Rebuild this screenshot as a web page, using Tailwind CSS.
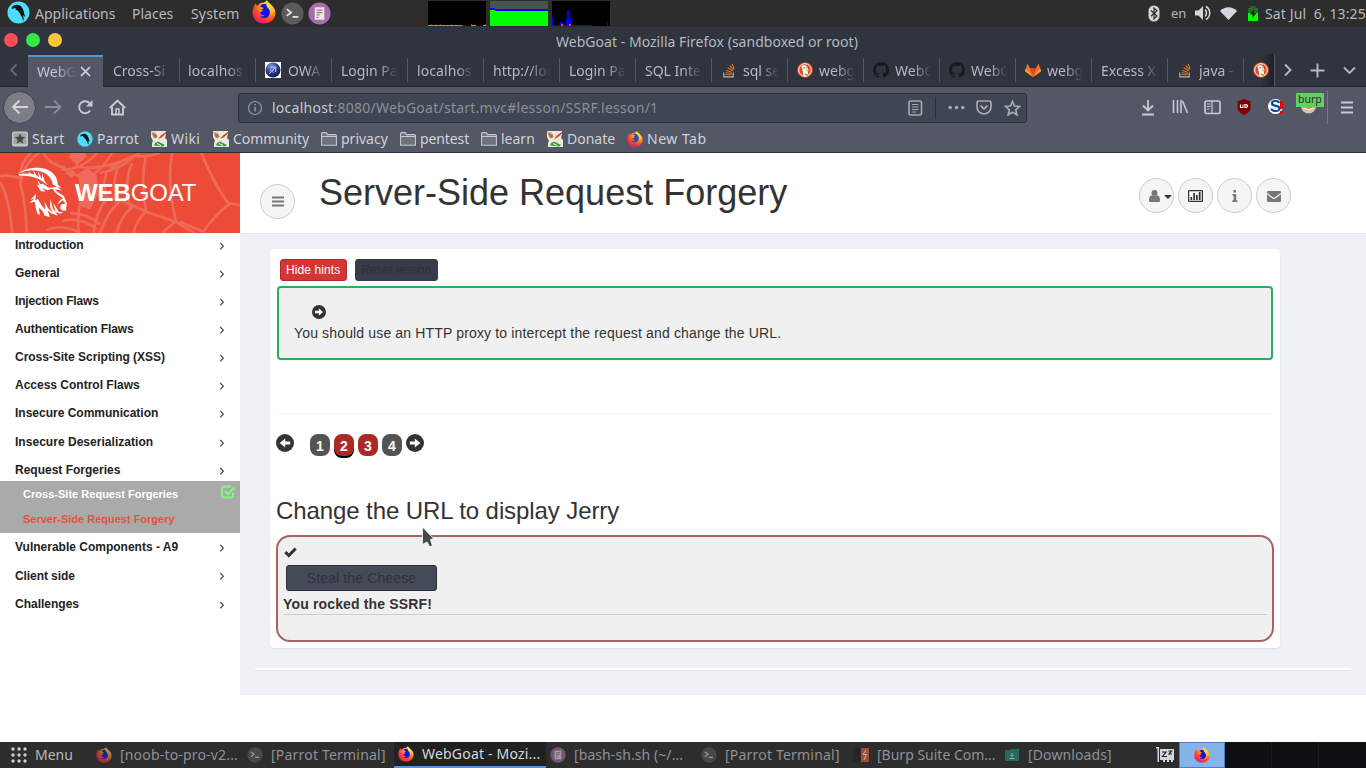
<!DOCTYPE html>
<html lang="en">
<head>
<meta charset="utf-8">
<title>WebGoat</title>
<script src="https://cdn.jsdelivr.net/npm/@tailwindcss/browser@4"></script>
</head>
<body class="w-[1366px] h-[768px] overflow-hidden bg-white flex flex-col relative font-['Noto_Sans',sans-serif] text-[14px] text-[#b4b9c2]">
<svg width="0" height="0" class="absolute">
  <defs>
    <radialGradient id="fxg" cx=".75" cy=".15" r="1"><stop offset="0" stop-color="#fff14a"/><stop offset=".35" stop-color="#ffb52a"/><stop offset=".65" stop-color="#ff4e2a"/><stop offset="1" stop-color="#e3106a"/></radialGradient>
    <radialGradient id="owg" cx=".4" cy=".3" r=".8"><stop offset="0" stop-color="#8fa4e0"/><stop offset=".5" stop-color="#2b3f93"/><stop offset="1" stop-color="#060a33"/></radialGradient>
    <symbol id="fx" viewBox="0 0 24 24"><path d="M12 2.500C13.500 2 14 1 14.800 0c1 2.500 3.200 3.200 5 5.500C22 7 23.500 10 23.500 13c0 6-5 10.500-11.500 10.500S.5 19 .5 12.500C.5 9 2 6 3.500 3.500L5 6c2-2.500 4.500-3.500 7-3.500z" fill="url(#fxg)"/><path d="M8 6c2-2 5-2.500 6.500-1.500C14 6 15 7 16.500 8.500c2 2.500 1.800 6-.2 8-2.300 2.200-6.300 2-8.500 0 2 .5 4-.3 5-1.500-2.800.8-4.300-.8-4.800-2.500L11 11 9.500 9.500 12 8c-1.500-.2-2.800-1-4-2z" fill="#1010f0"/></symbol>
    <symbol id="fxn" viewBox="0 0 24 24"><path d="M12 2.500C13.500 2 14 1 14.800 0c1 2.500 3.200 3.200 5 5.500C22 7 23.500 10 23.500 13c0 6-5 10.500-11.500 10.500S.5 19 .5 12.500C.5 9 2 6 3.500 3.500L5 6c2-2.500 4.500-3.500 7-3.500z" fill="url(#fxg)"/><path d="M9 5c3-1.500 6-.5 7.500 2 2.500 3.500 1 8-2 9.500-3 1.300-6 0-7-2 2 .6 3.500.2 4.500-1-2.500.3-3.500-1-4-2.500L11 10 10 8.500 12 7c-1.200-.5-2-1-3-2z" fill="#2b4ea8"/></symbol>
    <symbol id="parrot" viewBox="0 0 24 24"><circle cx="12" cy="12" r="11.500" fill="#4cdcfc"/><path d="M5 7C7 3.500 12 3 15 6c2.500 2.500 2.800 6.500 4 11l-2-2.500.5 7-2.500-5.500c-1-2-2.500-4.500-4.500-6.500L9 9.500 9.500 8C8 7 6.500 7.500 5 8.500z" fill="#111"/></symbol>
    <symbol id="term" viewBox="0 0 24 24"><circle cx="12" cy="12" r="11.500" fill="#5b5b5b"/><path d="M6 7.500l4.500 3.500L6 14.500M12 15.500h6" fill="none" stroke="#e6e6e6" stroke-width="1.800"/></symbol>
    <symbol id="pluma" viewBox="0 0 24 24"><circle cx="12" cy="12" r="11.500" fill="#a86bb0"/><path d="M7 5.500H17V18.500H7z" fill="#f0e9dd"/><path d="M9 8.500H15M9 11H15M9 13.500H12M9 16h2" stroke="#8d7b84" stroke-width="1.300"/></symbol>
    <symbol id="ddg" viewBox="0 0 16 16"><circle cx="8" cy="8" r="7.800" fill="#de4b22"/><circle cx="8" cy="8" r="6.300" fill="none" stroke="#fff" stroke-width="1"/><path d="M4.500 4.500C6 2.800 9 3 10.300 5c.6 1.200.8 3 .6 4.500l.4 4.300C9.500 14.500 8 14.400 6.500 14L5.300 7.500z" fill="#fff"/><path d="M8.500 7.500c2-.3 3.500 0 4.500.3-.5 1-2.500 1.600-4.500 1.400z" fill="#fbbf1c"/><circle cx="7" cy="6" r=".8" fill="#2d4f8e"/><circle cx="9.300" cy="5.800" r=".6" fill="#2d4f8e"/><path d="M7.500 11.500l3.500 1v1.300l-3-.5z" fill="#3aa935"/></symbol>
    <symbol id="gh" viewBox="0 0 16 16"><path fill="#17191d" d="M8 0C3.580 0 0 3.580 0 8c0 3.540 2.290 6.530 5.470 7.590.4.070.55-.17.55-.38v-1.490c-2.010.37-2.530-.49-2.690-.94-.09-.23-.48-.94-.82-1.130-.28-.15-.68-.52-.01-.53.63-.01 1.080.58 1.230.82.720 1.210 1.870.87 2.330.66.070-.52.280-.87.510-1.070-1.780-.2-3.640-.89-3.640-3.950 0-.87.310-1.590.82-2.150-.08-.2-.36-1.020.08-2.120 0 0 .67-.21 2.200.82a7.500 7.500 0 014 0c1.530-1.040 2.200-.82 2.200-.82.44 1.100.16 1.920.08 2.120.51.56.82 1.270.82 2.150 0 3.070-1.870 3.750-3.650 3.950.29.25.54.730.54 1.480v2.200c0 .21.15.46.55.38A8 8 0 0016 8c0-4.420-3.580-8-8-8z"/></symbol>
    <symbol id="so" viewBox="0 0 16 16"><path d="M2.800 10.500v4.300h9.400v-4.300" fill="none" stroke="#b0b4b9" stroke-width="1.200"/><path d="M4.500 12.800h6M4.700 10.800l5.900.7M5.300 8.400l5.600 1.800M6.700 5.700l5 3.100M8.800 3.400l3.700 4.500M11.200 2l2 5" stroke="#d9731f" stroke-width="1.100"/></symbol>
    <symbol id="gl" viewBox="0 0 16 16"><path d="M8 15L0 9.200 2.500 1.500 5 6.500h6l2.500-5L16 9.200z" fill="#fc6d26"/><path d="M8 15L5 6.500h6z" fill="#e24329"/><path d="M8 15L0 9.200l.8-2.700z M8 15l8-5.800-.8-2.700z" fill="#fca326"/></symbol>
    <symbol id="wiki" viewBox="0 0 16 16"><path d="M0 0h15v3l-1 4 2 2v7H1v-4l1-2-2-4z" fill="#e9e9df"/><path d="M0 .5l4 .5 2 3-1 4-3-2z" fill="#d9b28d"/><path d="M15.500.5L10 4.500 7 8l3.500-1.500 5-4.500z" fill="#d03a22"/><path d="M1 2l4.500 1.500L6.500 6 3 7z" fill="#b9683b"/><path d="M3 14.500L4 12l3-1.500 7 3.500-2 1.500z" fill="#3c9b3a"/><path d="M6 12.500l4 2" stroke="#fff" stroke-width="1"/></symbol>
    <symbol id="folder" viewBox="0 0 16 16"><path d="M.6 14.200V2.400l.8-.8h4l1 2h8.200l.8.8v9.800z" fill="#6d717d" stroke="#c6c9d0" stroke-width="1.100"/><path d="M1 5.500h14" stroke="#c6c9d0"/></symbol>
    <symbol id="chev" viewBox="0 0 8 10"><path d="M2.300 2L5.300 5.200 2.300 8.400" fill="none" stroke="#444" stroke-width="1.200"/></symbol>
    <symbol id="arr" viewBox="0 0 18 18"><circle cx="9" cy="9" r="9" fill="#333"/><path d="M3.800 7.400h5V4.500L14.300 9l-5.500 4.500v-2.900h-5z" fill="#fff"/></symbol>
  </defs>
</svg>

<!-- desktop panel -->
<div class="h-[27px] shrink-0 bg-[#2d2d2d] flex items-center text-[#b6b9bd] leading-[27px]">
  <svg class="w-[23px] h-[23px] ml-[7px] mb-[2px]"><use href="#parrot"/></svg>
  <span class="ml-[5px] w-[97px]">Applications</span><span class="w-[59px]">Places</span><span class="w-[61px] tracking-[0.150px]">System</span>
  <svg class="w-6 h-6 mb-[3px]"><use href="#fx"/></svg>
  <svg class="w-[23px] h-[23px] ml-[5px] mb-px"><use href="#term"/></svg>
  <svg class="w-[23px] h-[23px] ml-[4px] mb-px"><use href="#pluma"/></svg>
  <svg class="ml-[97px] -mt-px" width="182" height="25" shape-rendering="crispEdges">
    <rect width="58" height="25" fill="#000"/><path d="M0 24.500h34M43 24.500h5M55 24.500h3" stroke="#0f0"/><path d="M3 23.500h1M7 23.500h1M12 23.500h1M23 23.500h1M43 23.500h1M57 23.500h1" stroke="#f00"/>
    <rect x="62" width="58" height="25" fill="#46544b"/><path d="M62 7h5v1h53v17H62z" fill="#00f"/><path d="M62 9h5v1h53v15H62z" fill="#0f0"/>
    <rect x="124" width="58" height="25" fill="#000"/><path d="M124 16h1v8h7v-3h3v3h3v-6h1V9h2v10h1v-3h1v8h21v1h-40zM179 21h1v4h-1z" fill="#00f"/><path d="M133 24h2M141 24h2" stroke="#f33" stroke-width="2"/>
  </svg>
  <div class="ml-auto flex items-center h-full">
    <svg class="mb-px" width="12" height="17" viewBox="0 0 12 17"><rect x=".5" y=".5" width="11" height="16" rx="5.500" fill="#d3d8e0"/><path d="M3 5.500l6 5.500-3 2.800V3l3 2.700-6 5.500" fill="none" stroke="#2d2d2d" stroke-width="1.200"/></svg>
    <span class="ml-[11px] w-[24px] text-[13px] -mt-px">en</span>
    <svg class="mb-px" width="16" height="16" viewBox="0 0 16 16"><path d="M0 5.500h3.500L8 1v14l-4.500-4.500H0z" fill="#d3d8e0"/><path d="M10 4.500c2 2 2 5 0 7M11 1.500c5 3 5 10 0 13" fill="none" stroke="#d3d8e0" stroke-width="1.500"/></svg>
    <svg class="ml-[9px] mb-px" width="17" height="13" viewBox="0 0 17 13"><path d="M0 4C5-1 12-1 17 4l-8.500 9z" fill="#d3d8e0"/></svg>
    <svg class="ml-[10px] mb-px" width="12" height="15" viewBox="0 0 12 15"><path d="M1 2h2.500V0h5v2H11v13H1z" fill="#256b2a"/><path d="M1 7h10v8H1z" fill="#0f0"/><path d="M7 3L3 8.500h2.500V12L9.500 7H7z" fill="#222"/></svg>
    <span class="ml-[6px] whitespace-pre w-[101px] tracking-[0.120px]">Sat Jul  6, 13:25</span>
  </div>
</div>

<!-- window title -->
<div class="h-[27px] shrink-0 bg-[#2f343f] flex items-center relative">
  <div class="flex gap-2 ml-[4px] mb-[1px]"><i class="size-[14px] rounded-full bg-[#f84e56]"></i><i class="size-[14px] rounded-full bg-[#38e647]"></i><i class="size-[14px] rounded-full bg-[#fdc43a]"></i></div>
  <span class="ml-[494px] leading-[27px] mt-[2px] whitespace-nowrap tracking-[0.030px]">WebGoat - Mozilla Firefox (sandboxed or root)</span>
</div>

<!-- tabs -->
<div class="h-[33px] shrink-0 bg-[#2f343f] border-b border-[#22252d] flex items-stretch leading-[33px] whitespace-nowrap">
  <div class="w-[28px] flex items-center justify-center"><svg width="10" height="14" viewBox="0 0 10 14"><path d="M7.500 1.500L2 7l5.500 5.500" fill="none" stroke="#646973" stroke-width="1.800"/></svg></div>
  <div class="w-[75px] bg-[#545866] -mb-px border-t-2 border-[#5294e2] flex items-center pl-[9px] text-[#c3c7ce] mt-[1px]">
    <span class="w-[39px] mask-r-from-50% mask-r-to-100% -mt-[2px]">WebG</span>
    <svg class="ml-[4px] mb-px" width="11" height="11" viewBox="0 0 11 11"><path d="M1 1l9 9M10 1l-9 9" stroke="#d3d7dd" stroke-width="1.700"/></svg>
  </div>
  <div class="w-[76px] pl-[10px] flex items-center"><span class="w-[57px] mask-r-from-70% mask-r-to-100%">Cross-Si</span></div>
  <div class="w-[76px] pl-[9px] flex items-center relative"><i class="w-px h-6 bg-[#555a65] absolute left-0"></i><span class="w-[57px] mask-r-from-70% mask-r-to-100% tracking-[0.100px]">localhos</span></div>
  <div class="w-[76px] pl-[10px] flex items-center relative"><i class="w-px h-6 bg-[#555a65] absolute left-0"></i><svg width="16" height="16" viewBox="0 0 16 16"><path d="M0 0h16v16H0z" fill="#fff"/><circle cx="8" cy="8" r="7.500" fill="url(#owg)"/><path d="M4 12l7-7M6 5.500l5-.5-.5 5M5.500 8l2.500 2.500" stroke="#aebcf0" fill="none"/></svg><span class="ml-[7px] w-[36px] mask-r-from-50% mask-r-to-100%">OWA</span></div>
  <div class="w-[76px] pl-[10px] flex items-center relative"><i class="w-px h-6 bg-[#555a65] absolute left-0"></i><span class="w-[57px] mask-r-from-65% mask-r-to-100%">Login Pa</span></div>
  <div class="w-[76px] pl-[10px] flex items-center relative"><i class="w-px h-6 bg-[#555a65] absolute left-0"></i><span class="w-[57px] mask-r-from-70% mask-r-to-100% tracking-[0.100px]">localhos</span></div>
  <div class="w-[76px] pl-[10px] flex items-center relative"><i class="w-px h-6 bg-[#555a65] absolute left-0"></i><span class="w-[60px] mask-r-from-60% mask-r-to-95%">http://loc</span></div>
  <div class="w-[76px] pl-[10px] flex items-center relative"><i class="w-px h-6 bg-[#555a65] absolute left-0"></i><span class="w-[57px] mask-r-from-65% mask-r-to-100%">Login Pa</span></div>
  <div class="w-[76px] pl-[10px] flex items-center relative"><i class="w-px h-6 bg-[#555a65] absolute left-0"></i><span class="w-[58px] mask-r-from-65% mask-r-to-100%">SQL Inte</span></div>
  <div class="w-[76px] pl-[10px] flex items-center relative"><i class="w-px h-6 bg-[#555a65] absolute left-0"></i><svg class="size-4"><use href="#so"/></svg><span class="ml-[6px] w-[36px] mask-r-from-50% mask-r-to-100%">sql se</span></div>
  <div class="w-[76px] pl-[10px] flex items-center relative"><i class="w-px h-6 bg-[#555a65] absolute left-0"></i><svg class="size-4"><use href="#ddg"/></svg><span class="ml-[6px] w-[36px] mask-r-from-50% mask-r-to-100%">webg</span></div>
  <div class="w-[76px] pl-[10px] flex items-center relative"><i class="w-px h-6 bg-[#555a65] absolute left-0"></i><svg class="size-4"><use href="#gh"/></svg><span class="ml-[6px] w-[38px] mask-r-from-50% mask-r-to-95%">WebG</span></div>
  <div class="w-[76px] pl-[10px] flex items-center relative"><i class="w-px h-6 bg-[#555a65] absolute left-0"></i><svg class="size-4"><use href="#gh"/></svg><span class="ml-[6px] w-[38px] mask-r-from-50% mask-r-to-95%">WebG</span></div>
  <div class="w-[76px] pl-[10px] flex items-center relative"><i class="w-px h-6 bg-[#555a65] absolute left-0"></i><svg class="size-4"><use href="#gl"/></svg><span class="ml-[6px] w-[36px] mask-r-from-50% mask-r-to-100%">webg</span></div>
  <div class="w-[76px] pl-[10px] flex items-center relative"><i class="w-px h-6 bg-[#555a65] absolute left-0"></i><span class="w-[58px] mask-r-from-70% mask-r-to-100%">Excess X</span></div>
  <div class="w-[76px] pl-[10px] flex items-center relative"><i class="w-px h-6 bg-[#555a65] absolute left-0"></i><svg class="size-4"><use href="#so"/></svg><span class="ml-[6px] w-[37px] mask-r-from-65% mask-r-to-100%">java -</span></div>
  <div class="w-[31px] pl-[10px] flex items-center relative bg-linear-to-r from-[#2f343f] from-60% to-[#1d2027]"><i class="w-px h-6 bg-[#555a65] absolute left-0"></i><svg class="size-4"><use href="#ddg"/></svg></div>
  <div class="flex-1 border-l border-[#555a65] flex items-center">
    <svg class="ml-[8px]" width="10" height="14" viewBox="0 0 10 14"><path d="M2 1.500L7.500 7 2 12.500" fill="none" stroke="#b4b9c2" stroke-width="1.900"/></svg>
    <svg class="ml-[17px]" width="15" height="15" viewBox="0 0 15 15"><path d="M7.500 .5v14M.5 7.500h14" stroke="#b4b9c2" stroke-width="1.900"/></svg>
    <svg class="ml-[18px]" width="13" height="9" viewBox="0 0 13 9"><path d="M1 1.500L6.500 7 12 1.500" fill="none" stroke="#b4b9c2" stroke-width="1.800"/></svg>
  </div>
</div>

<!-- toolbar -->
<div class="h-[39px] shrink-0 bg-[#545866] flex items-center">
  <div class="size-[33px] ml-[3px] mt-px rounded-full bg-[#7c7f85] border border-[#3f434e] flex items-center justify-center"><svg width="18" height="16" viewBox="0 0 18 16"><path d="M17 8H2M8.500 1.500L2 8l6.500 6.500" fill="none" stroke="#d3d7dd" stroke-width="1.900"/></svg></div>
  <svg class="ml-[9px] mt-px" width="17" height="16" viewBox="0 0 17 16"><path d="M0 8h15M9 1.500L15.500 8 9 14.500" fill="none" stroke="#898d96" stroke-width="1.800"/></svg>
  <svg class="ml-[15px] mt-px" width="17" height="16" viewBox="0 0 17 16"><path d="M13.200 11.500A6 6 0 1 1 12.500 4" fill="none" stroke="#c6cad1" stroke-width="1.900"/><path d="M15.500 1v6.500H9z" fill="#c6cad1"/></svg>
  <svg class="ml-[15px] mt-px" width="17" height="17" viewBox="0 0 17 17"><path d="M.8 9L8.500 1.500 16.200 9M3 8v7.500h11V8" fill="none" stroke="#c6cad1" stroke-width="1.900"/><path d="M7 15v-5h3v5" fill="none" stroke="#c6cad1" stroke-width="1.500"/></svg>
  <div class="ml-[112px] mt-[2px] w-[789px] h-[30px] rounded-[3px] border border-[#2b2f3b] bg-[#404552] flex items-center">
    <svg class="ml-[8px]" width="16" height="16" viewBox="0 0 16 16"><circle cx="8" cy="8" r="6.500" fill="none" stroke="#9298a3" stroke-width="1.200"/><path d="M8 7v4.500M8 4v1.500" stroke="#9298a3" stroke-width="1.600"/></svg>
    <span class="ml-[9px] leading-[28px] text-[#8b909b] tracking-[0.250px]"><span class="text-[#c6cad1]">localhost</span>:8080/WebGoat/start.mvc#lesson/SSRF.lesson/1</span>
    <svg class="ml-auto" width="15" height="16" viewBox="0 0 15 16"><rect x="1" y="1" width="12.500" height="14" rx="1.500" fill="none" stroke="#a5aab3" stroke-width="1.600"/><path d="M4 4.500h6.500M4 7h6.500M4 9.500h6.500M4 12h4" stroke="#a5aab3"/></svg>
    <i class="ml-[12px] w-px h-[22px] bg-[#2b2f3b]"></i>
    <svg class="ml-[12px]" width="17" height="5" viewBox="0 0 17 5"><circle cx="2.200" cy="2.500" r="1.800" fill="#a5aab3"/><circle cx="8.500" cy="2.500" r="1.800" fill="#a5aab3"/><circle cx="14.800" cy="2.500" r="1.800" fill="#a5aab3"/></svg>
    <svg class="ml-[11px]" width="16" height="15" viewBox="0 0 16 15"><path d="M1 2.500L2 1h12l1 1.500V7a7 7 0 0 1-14 0z" fill="none" stroke="#a5aab3" stroke-width="1.700"/><path d="M4.500 5.500L8 9l3.500-3.500" fill="none" stroke="#a5aab3" stroke-width="1.900"/></svg>
    <svg class="ml-[12px] mr-[5px]" width="17" height="16" viewBox="0 0 17 16"><path d="M8.500 1.500l2 4.500 5 .5-3.800 3.300 1.200 5-4.400-2.600-4.400 2.600 1.200-5L1.500 6.500l5-.5z" fill="none" stroke="#a5aab3" stroke-width="1.700"/></svg>
  </div>
  <div class="ml-auto mt-px flex items-center">
    <svg width="14" height="17" viewBox="0 0 14 17"><path d="M7 1v10M2 6.500l5 5 5-5M1 15.500h12" fill="none" stroke="#c6cad1" stroke-width="1.800"/></svg>
    <svg class="ml-[17px]" width="17" height="16" viewBox="0 0 17 16"><path d="M1.500 1v13M5.500 1v13M9 1v13M10.500 2l5 12" stroke="#c6cad1" stroke-width="1.600"/></svg>
    <svg class="ml-[15px]" width="17" height="15" viewBox="0 0 17 15"><rect x="1" y="1" width="15" height="12.500" rx="1.500" fill="none" stroke="#c6cad1" stroke-width="1.700"/><path d="M8 1v12M3 4h3.500M3 6.500h3.500M3 9h2.500" stroke="#c6cad1" stroke-width="1.200"/></svg>
    <svg class="ml-[16px]" width="14" height="16" viewBox="0 0 14 16"><path d="M7 0l6.500 2.500V8c0 4-3 6.500-6.500 8C3.500 14.500.5 12 .5 8V2.500z" fill="#800000"/><path d="M3.500 5.500v3h2.500v-3M8 5.500v3h1.500l1-1V6.500l-1-1z" fill="none" stroke="#fff" stroke-width="1.100"/></svg>
    <div class="ml-[17px] w-[16px] h-[16px] relative"><div class="size-[15px] rounded-full bg-white flex items-center justify-center font-['Liberation_Sans',sans-serif] font-bold text-[17px] text-[#0b4a9c]">S</div><i class="absolute left-[12px] top-[2px] w-[3px] h-[8px] bg-[#f00000]"></i><i class="absolute left-[12px] top-[12px] w-[3px] h-[3px] bg-[#f00000]"></i></div>
    <div class="ml-[12px] w-[28px] h-[22px] relative mr-[3px]">
      <svg class="absolute left-[4px] top-[2px]" width="17" height="17" viewBox="0 0 17 17"><circle cx="8.500" cy="8" r="7.500" fill="#d9c3ab"/><circle cx="8.500" cy="7" r="5.500" fill="#e8892c"/><path d="M4 10l4.500 2 4.500-2" stroke="#fff" stroke-width="1.300" fill="none"/></svg>
      <span class="absolute left-0 -top-[3px] h-[14px] w-[28px] bg-[#66cc66] text-[#243524] text-[10.500px] leading-[13px] pl-[2px]">burp</span>
    </div>
    <i class="w-px h-[33px] bg-[#767a86]"></i>
    <svg class="ml-[13px] mr-[13px]" width="12" height="13" viewBox="0 0 12 13"><path d="M0 1.500h12M0 6.500h12M0 11.500h12" stroke="#c6cad1" stroke-width="1.900"/></svg>
  </div>
</div>

<!-- bookmarks -->
<div class="h-[27px] shrink-0 bg-[#545866] border-b border-[#2b2f3b] flex items-center text-[#cfd2d8] leading-[26px] whitespace-nowrap">
  <svg class="ml-[12px] mr-1" width="16" height="16" viewBox="0 0 16 16"><rect y=".5" width="16" height="15" rx="2" fill="#c4c4c4"/><rect x="1.500" y="2" width="13" height="11" fill="#a4a4a4"/><path d="M8 2.500l1.500 3.300 3.700.4-2.800 2.600.8 3.800L8 10.700l-3.200 1.900.8-3.800-2.800-2.600 3.700-.4z" fill="#484848"/></svg><span class="w-[45px] tracking-[0.200px]">Start</span>
  <svg class="size-4 mr-1"><use href="#parrot"/></svg><span class="w-[54px] tracking-[0.150px]">Parrot</span>
  <svg class="size-4 mr-1"><use href="#wiki"/></svg><span class="w-[42px] tracking-[0.400px]">Wiki</span>
  <svg class="size-4 mr-1"><use href="#wiki"/></svg><span class="w-[88px] tracking-[-0.050px]">Community</span>
  <svg class="size-4 mr-1"><use href="#folder"/></svg><span class="w-[59px]">privacy</span>
  <svg class="size-4 mr-1"><use href="#folder"/></svg><span class="w-[61px] tracking-[-0.100px]">pentest</span>
  <svg class="size-4 mr-1"><use href="#folder"/></svg><span class="w-[46px]">learn</span>
  <svg class="size-4 mr-1"><use href="#wiki"/></svg><span class="w-[60px]">Donate</span>
  <svg class="size-4 mr-1"><use href="#fxn"/></svg><span class="tracking-[0.500px]">New Tab</span>
</div>

<!-- page -->
<div class="h-[589px] shrink-0 flex font-['Liberation_Sans',Arial,sans-serif] text-[#333]">
  <div class="w-[240px] shrink-0">
    <div class="h-[80px] bg-[#ec4c37] relative">
      <svg class="absolute inset-0" width="240" height="80" viewBox="0 0 720 240">
        <g fill="none" stroke="#ef6a5a" stroke-width="8">
          <path d="M0 70Q30 64 62 76Q56 36 92 0M118 0Q70 30 62 90M0 86Q30 140 36 240M60 90Q78 150 80 240M130 0Q150 36 196 44M185 50Q250 50 290 0M190 45Q220 70 250 70M336 0Q310 50 252 84M225 38Q300 60 420 0M300 60Q360 50 408 6Q370 20 330 46M404 8Q440 14 480 0M438 6Q420 90 438 172M396 30Q370 86 392 168M354 44Q334 90 350 150M320 60Q306 90 318 128M258 120Q350 130 438 176L526 206L584 240M438 176Q410 200 400 240M400 160Q360 190 350 240M360 144Q320 180 300 240M322 136Q290 170 280 240M246 130Q230 180 236 240M210 180Q260 180 300 214M186 204Q240 190 290 228M138 232Q190 210 240 240M516 0Q500 90 528 204L486 240M604 0Q640 90 684 150L720 156M690 152Q640 190 610 236L540 206"/>
        </g>
        <path d="M236 60L262 46L290 66L296 120L270 170L244 160L240 120zM196 60Q210 44 226 56L216 76zM206 12L232 36L262 8L254 0H212z" fill="#ef6a5a"/>
      </svg>
      <svg class="absolute inset-0" width="240" height="80" viewBox="0 0 720 240" fill="#fff">
        <path d="M55 62C78 44 112 40 138 48C164 58 174 78 173 94L184 104L170 102L158 94C156 76 142 60 118 54C96 50 76 52 55 62z"/>
        <path d="M56 64C84 58 106 62 122 74C132 82 140 90 142 97L134 90C120 76 98 68 58 68z"/>
        <path d="M84 54l14 12-6 1zM100 52l12 20-8-3zM114 54l12 26-9-7zM126 60l10 30-10-10z"/>
        <path d="M112 80L118 98L110 94L122 114L136 116L128 106L142 112L152 108L184 112L172 102L146 104L128 92L122 94z"/>
        <path d="M164 108C170 118 186 124 192 130L201 152L198 166L200 172L190 174L182 168C178 160 184 150 192 154L196 150L188 142L170 156L182 140L190 136C182 130 168 124 160 110z"/>
        <path d="M108 122L92 140L104 136L88 150L104 146L108 168L112 182L120 186L116 164L128 174L134 188L150 192L142 172L152 180L174 188L158 166L152 138L150 162L158 178L144 166L134 146L136 170L124 156L114 138L106 142z"/>
        <path d="M160 150L176 176L190 178L180 182L166 176z"/>
      </svg>
      <div class="absolute left-[75px] top-[24px] text-[24px] leading-[32px] text-white tracking-[-0.120px]"><b>WEB</b>GOAT</div>
    </div>
    <nav class="text-[12px] font-bold text-[#222] leading-[24px]">
      <div class="h-[28.100px] pl-[15px] pr-[14px] flex justify-between"><span class="tracking-[-0.120px]">Introduction</span><svg class="w-2 h-[10px] mt-2"><use href="#chev"/></svg></div>
      <div class="h-[28.100px] pl-[15px] pr-[14px] flex justify-between"><span>General</span><svg class="w-2 h-[10px] mt-2"><use href="#chev"/></svg></div>
      <div class="h-[28.100px] pl-[15px] pr-[14px] flex justify-between"><span class="tracking-[-0.150px]">Injection Flaws</span><svg class="w-2 h-[10px] mt-2"><use href="#chev"/></svg></div>
      <div class="h-[28.100px] pl-[15px] pr-[14px] flex justify-between"><span class="tracking-[-0.100px]">Authentication Flaws</span><svg class="w-2 h-[10px] mt-2"><use href="#chev"/></svg></div>
      <div class="h-[28px] pl-[15px] pr-[14px] flex justify-between"><span class="tracking-[-0.030px]">Cross-Site Scripting (XSS)</span><svg class="w-2 h-[10px] mt-2"><use href="#chev"/></svg></div>
      <div class="h-[28px] pl-[15px] pr-[14px] flex justify-between"><span>Access Control Flaws</span><svg class="w-2 h-[10px] mt-2"><use href="#chev"/></svg></div>
      <div class="h-[28.400px] pl-[15px] pr-[14px] flex justify-between"><span>Insecure Communication</span><svg class="w-2 h-[10px] mt-2"><use href="#chev"/></svg></div>
      <div class="h-[28px] pl-[15px] pr-[14px] flex justify-between"><span class="tracking-[0.030px]">Insecure Deserialization</span><svg class="w-2 h-[10px] mt-2"><use href="#chev"/></svg></div>
      <div class="h-[23.200px] pl-[15px] pr-[14px] flex justify-between"><span>Request Forgeries</span><svg class="w-2 h-[10px] mt-2"><use href="#chev"/></svg></div>
      <div class="h-[52px] bg-[#aaa] text-[11px] text-white pl-[23px] pr-[5px]">
        <div class="h-[26px] flex justify-between leading-[26px]"><span class="tracking-[0.020px]">Cross-Site Request Forgeries</span><svg class="mt-[4px]" width="15" height="14" viewBox="0 0 15 14"><path d="M13 8v2.500a2 2 0 0 1-2 2H4a2 2 0 0 1-2-2v-7a2 2 0 0 1 2-2h7" fill="none" stroke="#80f980" stroke-width="2"/><path d="M5 6l3 3L14.500 2.500" fill="none" stroke="#80f980" stroke-width="2.200"/></svg></div>
        <div class="h-[26px] leading-[25px] text-[#e8503c]">Server-Side Request Forgery</div>
      </div>
      <div class="h-[28.800px] mt-[2px] pl-[15px] pr-[14px] flex justify-between"><span>Vulnerable Components - A9</span><svg class="w-2 h-[10px] mt-2"><use href="#chev"/></svg></div>
      <div class="h-[28.200px] pl-[15px] pr-[14px] flex justify-between"><span class="tracking-[-0.080px]">Client side</span><svg class="w-2 h-[10px] mt-[7px]"><use href="#chev"/></svg></div>
      <div class="h-[28.100px] pl-[15px] pr-[14px] flex justify-between"><span>Challenges</span><svg class="w-2 h-[10px] mt-2"><use href="#chev"/></svg></div>
    </nav>
  </div>

  <div class="flex-1">
    <header class="h-[81px] border-b border-[#e5e6ec] flex">
      <div class="ml-[20px] mt-[31px] size-[35px] rounded-full border border-[#ccc] bg-[#f5f5f5] flex items-center justify-center"><svg width="12" height="11" viewBox="0 0 12 11"><path d="M0 1.500h12M0 5.500h12M0 9.500h12" stroke="#777" stroke-width="2"/></svg></div>
      <h1 class="ml-[24px] mt-[20px] text-[36px] leading-[40px]">Server-Side Request Forgery</h1>
      <div class="ml-auto mr-[75px] mt-[25px] flex gap-[4px]">
        <div class="size-[35px] rounded-full border border-[#ccc] bg-[#f5f5f5] flex items-center pl-[9px]"><svg width="11" height="12" viewBox="0 0 11 12"><circle cx="5.500" cy="3" r="3" fill="#777"/><path d="M0 10.500C0 7 1 5.500 3 5.300c1.500 1 3.500 1 5 0 2 .2 3 1.700 3 5.200 0 1-.5 1.500-1.500 1.500h-8C.5 12 0 11.500 0 10.500z" fill="#777"/></svg><svg class="ml-[4px] mt-[2px] shrink-0" width="8" height="4" viewBox="0 0 8 4"><path d="M0 0h8L4 4z" fill="#333"/></svg></div>
        <div class="size-[35px] rounded-full border border-[#ccc] bg-[#f5f5f5] flex items-center justify-center"><svg width="15" height="12" viewBox="0 0 15 12"><rect x=".6" y=".6" width="13.800" height="10.800" rx=".5" fill="none" stroke="#333" stroke-width="1.200"/><path d="M3.300 10V7M6.100 10V3M8.900 10V5M11.700 10V2" stroke="#333" stroke-width="1.700"/></svg></div>
        <div class="size-[35px] rounded-full border border-[#ccc] bg-[#f5f5f5] flex items-center justify-center"><svg width="6" height="12" viewBox="0 0 6 12"><path d="M1.500 0h2.500v2.500H1.500zM.5 4h3.700v6.300H5.500V12H.3v-1.700h1.300V5.700H.5z" fill="#777"/></svg></div>
        <div class="size-[35px] rounded-full border border-[#ccc] bg-[#f5f5f5] flex items-center justify-center"><svg class="mt-px" width="14" height="11" viewBox="0 0 14 11"><rect width="14" height="11" rx="1.200" fill="#777"/><path d="M0 2.500l5.500 4.300c1 .7 2 .7 3 0L14 2.500" fill="none" stroke="#f5f5f5" stroke-width="1.200"/></svg></div>
      </div>
    </header>
    <main class="h-[461px] bg-[#f0f1f7] pt-[15px] pl-[15px] pr-[15px]">
      <div class="ml-[15px] w-[1010px] h-[399px] bg-white rounded-[4px] shadow-[0_1px_2px_rgba(0,0,0,0.08)] px-[6px] pt-[10px]">
        <div class="flex gap-2 pl-[4px] text-[12px] leading-[20px]">
          <div class="w-[67px] h-[22px] rounded-[3px] border border-[#b02c2c] bg-[#d43636] text-white pl-[5px] tracking-[0.100px]">Hide hints</div>
          <div class="w-[83px] h-[22px] rounded-[3px] border border-[#383c4a] bg-[#383c4a] text-[#2e3036] pl-[5px] tracking-[0.080px]">Reset lesson</div>
        </div>
        <div class="ml-px mt-[5px] w-[996px] h-[74px] rounded-[4px] border-2 border-[#27ae60] bg-[#f0f0f0] shadow-[0_1px_1px_rgba(0,0,0,0.05)] pl-[15px] pt-[17px]">
          <svg class="ml-[18px] size-[14px]"><use href="#arr"/></svg>
          <p class="mt-[4px] text-[14px] leading-[20px] tracking-[0.150px]">You should use an HTTP proxy to intercept the request and change the URL.</p>
        </div>
        <div class="h-[54px] w-[998px] border-b border-[#f6f6f6]"></div>
        <div class="mt-[20px] flex h-[24px] text-[14px] leading-[24px] font-bold text-white text-center">
          <svg class="size-[18px] rotate-180 mr-[16px]"><use href="#arr"/></svg>
          <div class="flex gap-[4px]">
            <span class="w-5 h-[22px] rounded-[8px] bg-[#545454]">1</span>
            <span class="w-5 h-[22px] rounded-[8px] bg-[#ac2925] shadow-[0_2px_0_#000]">2</span>
            <span class="w-5 h-[22px] rounded-[8px] bg-[#ac2925]">3</span>
            <span class="w-5 h-[22px] rounded-[8px] bg-[#545454]">4</span>
          </div>
          <svg class="size-[18px] ml-[4px]"><use href="#arr"/></svg>
        </div>
        <h2 class="mt-[38px] text-[24px] leading-[30px] tracking-[-0.090px]">Change the URL to display Jerry</h2>
        <div class="mt-[9px] w-[998px] h-[107px] rounded-[14px] border-2 border-[#a96363] bg-[#f0f0f0] px-[5px] pt-[10px]">
          <svg class="ml-[0.500px]" width="13" height="11" viewBox="0 0 13 11"><path d="M1.300 5l3.500 3.500L11.700 1.500" fill="none" stroke="#333" stroke-width="3"/></svg>
          <div class="ml-[3px] mt-[7px] w-[151px] h-[26px] rounded-[3px] border border-[#2b2e39] bg-[#444a58] text-[14px] leading-[24px] text-center text-[#303238] tracking-[0.120px]">Steal the Cheese</div>
          <div class="mt-[3px] h-[21px] border-b border-[#ccc] text-[14px] leading-[20px] font-bold tracking-[0.150px]">You rocked the SSRF!</div>
        </div>
      </div>
      <div class="mt-[20px] h-[2px] bg-white shadow-[0_1px_1px_rgba(0,0,0,0.05)]"></div>
    </main>
  </div>
</div>

<!-- taskbar -->
<div class="h-[26px] shrink-0 bg-[#2d2d2d] flex items-center leading-[26px] whitespace-nowrap text-[#8e9197]">
  <svg class="ml-[11px]" width="16" height="16" viewBox="0 0 16 16" fill="#c9cdd4"><circle cx="2" cy="2" r="1.700"/><circle cx="8" cy="2" r="1.700"/><circle cx="14" cy="2" r="1.700"/><circle cx="2" cy="8" r="1.700"/><circle cx="8" cy="8" r="1.700"/><circle cx="14" cy="8" r="1.700"/><circle cx="2" cy="14" r="1.700"/><circle cx="8" cy="14" r="1.700"/><circle cx="14" cy="14" r="1.700"/></svg>
  <span class="ml-[8px] w-[61px] text-[#b6b9bd]">Menu</span>
  <svg class="size-4 opacity-60"><use href="#fx"/></svg><span class="ml-[8px] w-[127px] tracking-[0.180px]">[noob-to-pro-v2...</span>
  <svg class="size-4 opacity-60"><use href="#term"/></svg><span class="ml-[8px] w-[123px] tracking-[0.200px]">[Parrot Terminal]</span>
  <div class="w-[152px] h-full bg-[#212121] border-b-2 border-[#5294e2] flex items-center text-[#d6d8dc] pl-[4px]"><svg class="size-4"><use href="#fx"/></svg><span class="ml-[8px] tracking-[0.200px]">WebGoat - Mozi...</span></div>
  <svg class="ml-[4px] size-4 opacity-60"><use href="#pluma"/></svg><span class="ml-[8px] w-[127px] tracking-[0.080px]">[bash-sh.sh (~/...</span>
  <svg class="size-4 opacity-60"><use href="#term"/></svg><span class="ml-[8px] w-[128px] tracking-[0.200px]">[Parrot Terminal]</span>
  <svg width="16" height="14" viewBox="0 0 16 14"><path d="M0 0h7v14H0z" fill="#252525"/><path d="M8 0h8v14H8z" fill="#a24b30"/><path d="M13 2l-3 4.500h3.500L11 12" stroke="#c9b5ad" fill="none"/></svg><span class="ml-[8px] w-[127px]">[Burp Suite Com...</span>
  <svg width="16" height="12" viewBox="0 0 16 12"><path d="M1 1h5l1-1h8v12H1z" fill="#27695c"/><path d="M8 4v3M6.500 6L8 7.500 9.500 6M5.500 9.500h5" stroke="#8fb5ad" fill="none"/></svg><span class="ml-[8px] w-[128px] tracking-[0.120px]">[Downloads]</span>
  <svg width="18" height="16" viewBox="0 0 18 16"><path d="M0 0h3v15H1.500V1.500H0z" fill="#d3d8e0"/><path d="M4 2h14v11h-1v2h-2v-2h-2v2h-2v-2H9v2H7v-2H4z" fill="#d3d8e0"/><path d="M6 5h4L6.500 9.500H11M12.500 4h3l-2.500 3h3" fill="none" stroke="#222" stroke-width="1.200"/></svg>
  <div class="ml-[5px] w-[46px] h-full bg-[#86b2ea] border border-[#4a7fc8] flex items-center justify-center"><svg class="size-4"><use href="#fx"/></svg></div>
  <div class="flex-1 h-full bg-[#0e0f12] flex"><i class="w-[47px] border-r border-[#1a1b1f]"></i><i class="w-[47px] border-r border-[#1a1b1f]"></i></div>
</div>

<!-- mouse pointer -->
<svg class="absolute left-[421px] top-[526px]" width="15" height="22" viewBox="0 0 15 22"><path d="M1.500 1l11 11.500-3 1L11.500 20l-3 .5L6 16l-4.500 2.500z" fill="#484848" stroke="#fff" stroke-width=".8"/></svg>
</body>
</html>
